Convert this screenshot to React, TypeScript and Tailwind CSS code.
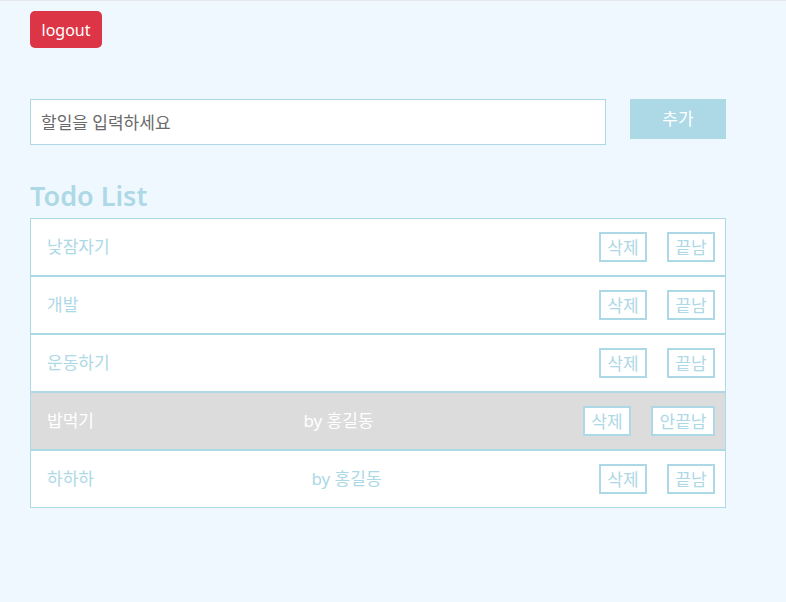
import React from "react";

const todos = [
  { title: "낮잠자기", author: "", done: false },
  { title: "개발", author: "", done: false },
  { title: "운동하기", author: "", done: false },
  { title: "밥먹기", author: "by 홍길동", done: true },
  { title: "하하하", author: "by 홍길동", done: false },
];

export default function App() {
  return (
    <div
      className="min-h-[602px] w-full bg-[#f0f8ff] border-t border-[#e3e6ea] px-[30px] pt-[10px]"
      style={{ fontFamily: '"Noto Sans", "Noto Sans CJK KR", sans-serif' }}
    >
      <button className="h-[37px] w-[72px] rounded-[5px] bg-[#dc3545] text-[16px] text-white leading-none">
        logout
      </button>
      <div className="mt-[51px] flex items-start gap-[24px]">
        <input
          className="h-[46px] w-[576px] border border-[#add8e6] bg-white px-[10px] text-[17px] text-[#555] outline-none placeholder:text-[#6a6a6a]"
          placeholder="할일을 입력하세요"
        />
        <button className="h-[40px] w-[96px] bg-[#add8e6] text-[17px] text-white">추가</button>
      </div>
      <h2 className="mt-[31px] text-[27px] font-semibold leading-[40px] text-[#add8e6]">Todo List</h2>
      <ul className="mt-[2px] w-[696px]">
        {todos.map((t, i) => (
          <li
            key={i}
            className={`flex h-[58px] items-center justify-between border border-[#add8e6] pl-[16px] pr-[10px] text-[17px] ${
              t.done ? "bg-[#dcdcdc] text-white" : "bg-white text-[#add8e6]"
            }`}
          >
            <span>{t.title}</span>
            {t.author && <span>{t.author}</span>}
            <div className="flex gap-[20px]">
              <button className="h-[30px] w-[48px] border-2 border-[#add8e6] bg-white text-[17px] leading-none text-[#add8e6]">
                삭제
              </button>
              <button
                className={`h-[30px] border-2 border-[#add8e6] bg-white text-[17px] leading-none text-[#add8e6] ${
                  t.done ? "w-[64px]" : "w-[48px]"
                }`}
              >
                {t.done ? "안끝남" : "끝남"}
              </button>
            </div>
          </li>
        ))}
      </ul>
    </div>
  );
}
